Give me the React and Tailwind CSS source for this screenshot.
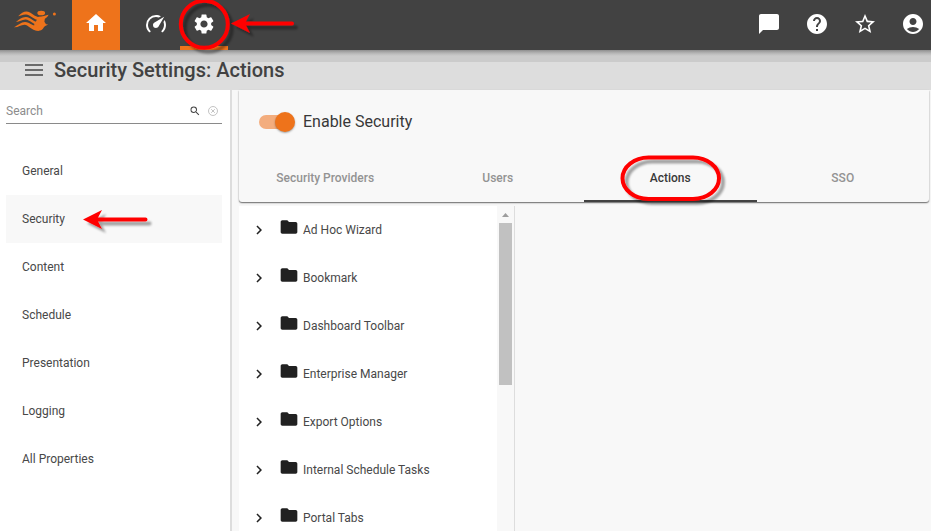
import React from "react";
import {
  MdHome, MdSettings, MdChatBubble, MdHelp, MdStarBorder, MdAccountCircle,
  MdMenu, MdSearch, MdFolder, MdChevronRight,
} from "react-icons/md";

const sections = ["General", "Security", "Content", "Schedule", "Presentation", "Logging", "All Properties"];
const tabs = ["Security Providers", "Users", "Actions", "SSO"];
const folders = [
  "Ad Hoc Wizard", "Bookmark", "Dashboard Toolbar", "Enterprise Manager",
  "Export Options", "Internal Schedule Tasks", "Portal Tabs",
];

function Logo() {
  return (
    <svg className="ml-[14px] mt-[10px] h-[22px] w-[42px]" viewBox="0 0 42 22" fill="#ee731b">
      <ellipse cx="27.2" cy="3" rx="3.9" ry="2.300" />
      <circle cx="40.400" cy="4.100" r="1.500" />
      <path d="M24.500 6.800C28.500 6.600 31.500 5.600 34.600 4.800C34 6.800 32 7.800 30.800 9L30.400 11.800L32 14.200L34 14.500C32.500 15.600 30.600 15.600 29.700 17.500C28 21 24.500 21.300 21.500 20L20 15Z" />
      <path d="M4.200 6.300C8 2.500 11.500 .2 16 2.500C19.500 4.500 21.500 7.200 26 7L26 10.500C20 10.200 16.500 5 12 4.600C9 4.400 7 6 4.200 6.300Z" />
      <path d="M2 12C5.500 9 8 6.700 12 6.900C17 7.400 19.500 12 25 12.200L25 15.500C19 14.800 16 9.700 11.500 9.500C8 9.400 5.500 11.900 2 12Z" />
      <path d="M0 17.300C4 15.300 7 12.200 11 12.100C16 12.300 18.500 16.200 24 16.400L25 20.700C17.500 21.500 15 14.900 10.500 14.800C6.500 14.800 4 17.700 0 17.300Z" />
    </svg>
  );
}

function Speedometer() {
  return (
    <svg className="h-6 w-6" viewBox="0 0 24 24" fill="currentColor">
      <path d="M12,16A3,3 0 0,1 9,13C9,11.88 9.61,10.9 10.5,10.39L20.21,4.77L14.68,14.35C14.18,15.33 13.17,16 12,16M12,3C13.81,3 15.5,3.5 16.97,4.32L14.87,5.53C14,5.19 13,5 12,5A8,8 0 0,0 4,13C4,15.21 4.89,17.21 6.34,18.65H6.35C6.74,19.04 6.74,19.67 6.35,20.06C5.96,20.45 5.32,20.45 4.93,20.07V20.07C3.12,18.26 2,15.76 2,13A10,10 0 0,1 12,3M22,13C22,15.76 20.88,18.26 19.07,20.07V20.07C18.68,20.45 18.05,20.45 17.66,20.06C17.27,19.67 17.27,19.04 17.66,18.65V18.65C19.11,17.2 20,15.21 20,13C20,12 19.81,11 19.46,10.1L20.67,8C21.5,9.5 22,11.18 22,13Z" />
    </svg>
  );
}

function Header() {
  return (
    <header className="flex h-[50px] shrink-0 bg-[#424242] text-white">
      <div className="w-[72px]"><Logo /></div>
      <div className="flex h-full w-12 justify-center bg-[#ee731b] pt-[11px]"><MdHome className="h-6 w-6" /></div>
      <div className="ml-3 flex h-full w-12 justify-center pt-3"><Speedometer /></div>
      <div className="flex h-full w-12 justify-center border-b-4 border-[#ee731b] pt-3"><MdSettings className="h-6 w-6" /></div>
      <div className="ml-auto flex gap-6 pr-[6px] pt-3">
        <MdChatBubble className="h-6 w-6" />
        <MdHelp className="h-6 w-6" />
        <MdStarBorder className="h-6 w-6" />
        <MdAccountCircle className="h-6 w-6" />
      </div>
    </header>
  );
}

function Sidebar() {
  return (
    <aside className="w-[232px] shrink-0 border-r-2 border-[#dddddd] bg-white px-[6px]">
      <div className="mb-[23px] flex h-[34px] w-[216px] items-center border-b border-[#8a8a8a] pt-2 text-[#8c8c8c]">
        <span className="flex-1">Search</span>
        <MdSearch className="mr-[7px] h-3 w-3 text-[#444]" />
        <svg className="mr-1 h-[10px] w-[10px]" viewBox="0 0 10 10" fill="none" stroke="#bcbcbc" strokeWidth="0.9">
          <circle cx="5" cy="5" r="4.5" /><path d="M3.200 3.200l3.600 3.600M6.800 3.200L3.200 6.800" />
        </svg>
      </div>
      <nav>
        {sections.map((s) => (
          <div key={s} className={"flex h-12 w-[216px] items-center pl-4 " + (s === "Security" ? "bg-[#f8f8f8]" : "")}>{s}</div>
        ))}
      </nav>
    </aside>
  );
}

function SecurityCard() {
  return (
    <div className="flex h-[112px] w-[690px] shrink-0 flex-col rounded-b-[3px] bg-[#f8f8f8] shadow-[0_1px_1px_rgba(0,0,0,0.35),0_1px_2px_rgba(0,0,0,0.3)]">
      <div className="flex h-16 items-center pl-5">
        <div className="flex h-[14px] w-[35px] items-center justify-end rounded-full bg-[#f3ad7e]">
          <div className="-mr-px h-5 w-5 shrink-0 rounded-full bg-[#ee731b] shadow-[0_1px_2px_rgba(0,0,0,0.35)]" />
        </div>
        <span className="ml-[9px] text-base text-[#383838]">Enable Security</span>
      </div>
      <div className="flex h-12 font-medium">
        {tabs.map((t) => (
          <div key={t} className={"flex w-1/4 items-center justify-center border-b-2 pt-[2px] " + (t === "Actions" ? "border-[#424242] text-[#383838]" : "border-transparent text-[#939393]")}>{t}</div>
        ))}
      </div>
    </div>
  );
}

function ActionTree() {
  return (
    <div className="mt-1 flex min-h-0 flex-1">
      <div className="w-[258px] overflow-hidden bg-white">
        {folders.map((f) => (
          <div key={f} className="flex h-12 items-center pl-[11px]">
            <MdChevronRight className="h-[18px] w-[18px] text-[#222]" />
            <MdFolder className="-mt-[7px] ml-[11px] h-5 w-5 text-[#212121]" />
            <span className="ml-1">{f}</span>
          </div>
        ))}
      </div>
      <div className="flex w-[18px] flex-col items-center border-r border-[#dddddd] bg-[#f8f8f8]">
        <svg className="mt-[7px] h-[4px] w-[7px]" viewBox="0 0 7 4" fill="#9d9d9d"><path d="M0 4L3.500 0L7 4Z" /></svg>
        <div className="mt-[6px] h-[162px] w-[13px] bg-[#c1c1c1]" />
      </div>
    </div>
  );
}

function Annotations() {
  return (
    <svg className="pointer-events-none absolute inset-0 z-20 h-[531px] w-[931px]" viewBox="0 0 931 531">
      <defs>
        <filter id="soft" x="-20%" y="-30%" width="150%" height="180%">
          <feDropShadow dx="4" dy="4" stdDeviation="1.200" floodColor="#000" floodOpacity="0.35" />
        </filter>
      </defs>
      <g filter="url(#soft)" stroke="#f00" fill="none" strokeWidth="4">
        <circle cx="204.300" cy="24.200" r="23.500" />
        <rect x="622.500" y="157.500" width="96.500" height="41.500" rx="26" ry="20.750" />
        <path d="M245 23.500H292M96 219.500H145.500" strokeLinecap="round" />
        <path d="M231 23.500L250 14L245 23.500L250 33Z M83 219.500L102 210L97 219.500L102 229Z" fill="#f00" stroke="none" />
      </g>
    </svg>
  );
}

export default function App() {
  return (
    <div className="relative flex h-[531px] w-[931px] flex-col overflow-hidden bg-[#f8f8f8] font-[Roboto,sans-serif] text-xs text-[#484848]">
      <Header />
      <div className="flex h-10 shrink-0 items-center bg-[linear-gradient(#8e8e8e_0px,#a8a8a8_2px,#bdbdbd_4px,#cbcbcb_6px,#cbcbcb_12px,#dddddd_12px)] pl-[22px]">
        <MdMenu className="h-6 w-6 text-[#6a6a6a]" />
        <h1 className="ml-2 text-xl font-medium text-[#424242]">Security Settings: Actions</h1>
      </div>
      <div className="flex min-h-0 flex-1">
        <Sidebar />
        <main className="flex min-w-0 flex-1 flex-col pl-[7px]">
          <SecurityCard />
          <ActionTree />
        </main>
      </div>
      <Annotations />
    </div>
  );
}
